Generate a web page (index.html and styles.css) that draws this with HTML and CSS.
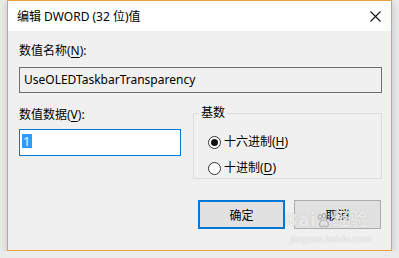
FILE: index.html
```html
<!DOCTYPE html>
<html lang="zh-CN">
<head>
    <meta charset="UTF-8">
    <meta name="viewport" content="width=device-width, initial-scale=1.0">
    <title>编辑 DWORD (32 位)值</title>
    <link rel="stylesheet" href="styles.css">
</head>
<body>
    <div class="window">
        <div class="titlebar">
            <span class="title">编辑 DWORD (32 位)值</span>
            <svg class="close" width="11" height="11" viewBox="0 0 11 11">
                <path d="M0.5 0.5 L10.5 10.5 M10.5 0.5 L0.5 10.5" stroke="#111" stroke-width="1.1"/>
            </svg>
        </div>
        <div class="content">
            <div class="label">数值名称(<u>N</u>):</div>
            <div class="namebox">UseOLEDTaskbarTransparency</div>

            <div class="row">
                <div class="datacol">
                    <div class="label">数值数据(<u>V</u>):</div>
                    <div class="valuebox"><span class="selected">1</span></div>
                </div>
                <fieldset class="base">
                    <legend>基数</legend>
                    <label class="option">
                        <span class="radio checked"></span>
                        <span>十六进制(<u>H</u>)</span>
                    </label>
                    <label class="option">
                        <span class="radio"></span>
                        <span>十进制(<u>D</u>)</span>
                    </label>
                </fieldset>
            </div>

            <div class="buttons">
                <button class="btn default">确定</button>
                <button class="btn">取消</button>
            </div>
        </div>
        <div class="watermark">
            <div class="wm-logo">
                <span>Bai</span>
                <svg class="paw" width="14" height="15" viewBox="0 0 14 15">
                    <g fill="none" stroke="rgba(150,150,150,0.6)" stroke-width="1.2">
                        <ellipse cx="3" cy="4" rx="1.8" ry="2.3"/>
                        <ellipse cx="7" cy="2.6" rx="1.8" ry="2.2"/>
                        <ellipse cx="11" cy="4" rx="1.8" ry="2.3"/>
                        <path d="M2.5 11.5 C3 8 5 7 7 7 C9 7 11 8 11.5 11.5 C11.5 14 9 14 7 13 C5 14 2.5 14 2.5 11.5 Z"/>
                    </g>
                </svg>
                <span>经验</span>
            </div>
            <div class="wm-url">jingyan.baidu.com</div>
        </div>
    </div>
</body>
</html>
```

FILE: styles.css
```css
body {
    margin: 0;
    background-color: #ebebeb;
    font-family: "Noto Sans", "Noto Sans CJK SC", sans-serif;
    font-size: 12px;
    color: #000;
}
.window {
    position: relative;
    box-sizing: border-box;
    width: 385px;
    height: 251px;
    margin-left: 7px;
    border: 1px solid #e6a23c;
    background-color: #f0f0f0;
    box-shadow: 0 2px 8px rgba(0, 0, 0, 0.18);
}
.titlebar {
    height: 30px;
    background-color: #fff;
    display: flex;
    align-items: center;
    justify-content: space-between;
    padding: 0 10px 0 9px;
}
.title {
    line-height: 16px;
    margin-top: 1px;
}
.close {
    margin-top: 1px;
}
.content {
    padding: 12px 9px 0 11px;
}
.label {
    line-height: 16px;
}
u {
    text-decoration-thickness: 1px;
    text-underline-offset: 2px;
}
.namebox {
    box-sizing: border-box;
    height: 26px;
    margin-top: 8px;
    border: 1px solid #6e6e6e;
    padding-left: 4px;
    line-height: 24px;
}
.row {
    display: flex;
    gap: 12px;
    margin-top: 12px;
}
.datacol {
    width: 162px;
    padding-top: 2px;
}
.valuebox {
    box-sizing: border-box;
    height: 27px;
    margin-top: 6px;
    border: 1px solid #0078d7;
    background-color: #fff;
    padding: 3px 0 0 2px;
}
.selected {
    display: inline-block;
    background-color: #3399ff;
    color: #eaf4ff;
    line-height: 14px;
    padding: 0 2px 0 1px;
    font-size: 13px;
}
.base {
    flex: 1;
    margin: 0;
    padding: 8px 0 0 14px;
    height: 74px;
    box-sizing: border-box;
    border: 1px solid #dcdcdc;
    min-width: 0;
}
.base legend {
    padding: 0 2px;
    margin-left: -9px;
    line-height: 16px;
}
.option {
    display: flex;
    align-items: center;
    gap: 3px;
    height: 26px;
    line-height: 16px;
}
.radio {
    box-sizing: border-box;
    width: 13px;
    height: 13px;
    border: 1px solid #333;
    border-radius: 50%;
    background-color: #fff;
    display: flex;
    align-items: center;
    justify-content: center;
}
.radio.checked::after {
    content: "";
    width: 7px;
    height: 7px;
    border-radius: 50%;
    background-color: #111;
}
.buttons {
    display: flex;
    justify-content: flex-end;
    gap: 9px;
    margin-top: 21px;
    padding-right: 1px;
}
.btn {
    box-sizing: border-box;
    width: 87px;
    height: 29px;
    background-color: #e1e1e1;
    border: 1px solid #adadad;
    font-family: inherit;
    font-size: 12px;
    color: #000;
    padding: 0;
}
.btn.default {
    border: 2px solid #0078d7;
}
.watermark {
    position: absolute;
    left: 276px;
    top: 208px;
    color: rgba(255, 255, 255, 0.7);
    text-shadow: 0 0 1px rgba(110, 110, 110, 0.4);
    pointer-events: none;
}
.wm-logo {
    display: flex;
    align-items: center;
    gap: 1px;
    font-family: "DejaVu Sans", "Noto Sans CJK SC", sans-serif;
    font-size: 18px;
    font-weight: bold;
    line-height: 22px;
}
.wm-url {
    font-family: "Liberation Serif", serif;
    font-size: 11px;
    line-height: 12px;
    margin-left: 6px;
    margin-top: 1px;
}
```
